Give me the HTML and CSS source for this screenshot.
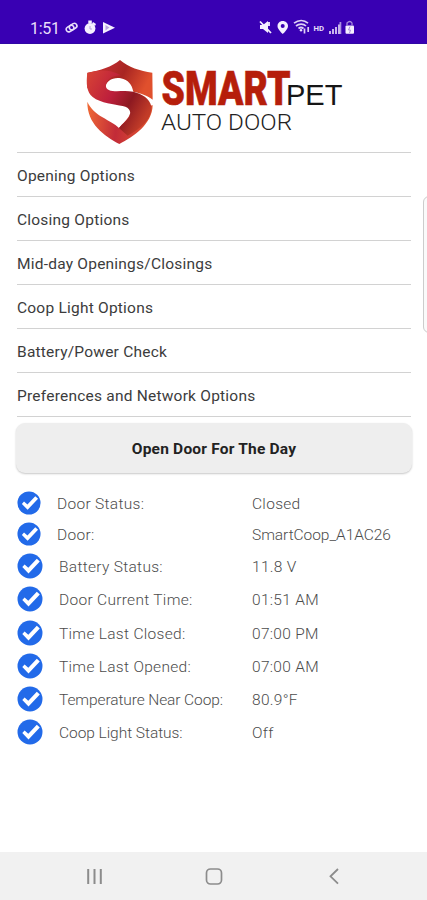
FILE: index.html
```html
<!DOCTYPE html>
<html lang="en">
<head>
<meta charset="utf-8">
<title>Smart Pet Auto Door</title>
<link rel="stylesheet" href="styles.css">
</head>
<body>
<div class="statusbar">
  <span class="clock">1:51</span>
  <svg class="status-icons" width="50" height="16" viewBox="65 19 50 16">
    <g fill="none" stroke="#e8defa" stroke-width="1.6"><rect x="65.8" y="26" width="8" height="5" rx="2.5" transform="rotate(-30 70 28)"/><rect x="69.3" y="24.2" width="8" height="5" rx="2.5" transform="rotate(-30 73 27)"/></g>
    <g fill="#f5f0ff"><circle cx="90" cy="28.5" r="5.4"/><rect x="88.3" y="20.5" width="3.5" height="3"/><path d="M93 22l3 2-1 2-3-2z"/><path d="M103 22l12 5.7-12 5.8z"/></g>
    <path d="M90 26v3h2" stroke="#b9a2e2" fill="none"/><path d="M105.5 25v5.500l4-3z" fill="#b9a2e2"/>
  </svg>
  <svg class="signal-icons" width="97" height="17" viewBox="258 18 97 17">
    <g fill="#f5f0ff"><path d="M260 25h3l5-4v12l-5-4h-3z"/><path d="M282.700 21c-3 0-5.200 2.200-5.200 5 0 3.600 5.200 8 5.200 8s5.300-4.400 5.300-8c0-2.800-2.300-5-5.300-5z"/></g>
    <path d="M260 21.500l11 11.500M269 22v4" stroke="#f5f0ff" stroke-width="1.800"/>
    <circle cx="282.700" cy="26" r="2" fill="#3900b3"/>
    <g fill="none" stroke="#ded0f5" stroke-width="1.700"><path d="M294 23.200c4.500-3.500 10-3.500 14 0M296 26c3-2.500 7.500-2.500 10 0M298.500 28.500c1.500-1.200 3.500-1.200 5 0"/><path d="M304.500 28.500v5M308.200 27v5"/></g>
    <circle cx="301" cy="30.200" r="1.200" fill="#eee6ff"/>
    <text x="313.500" y="30.500" class="hd" textLength="10.500" lengthAdjust="spacingAndGlyphs">HD</text>
    <g fill="#c8b4ec"><path d="M329 31h2v3h-2zM332 29h2v5h-2zM335 27h2v7h-2zM338 24.500h2v9.500h-2z"/><path d="M339.500 22h1.800v12h-1.800z" opacity=".8"/></g>
    <rect x="345.500" y="25.500" width="8.500" height="8.300" rx="1" fill="#f5f0ff"/><path d="M347 25v-2q3-3 5 0v2" fill="none" stroke="#a98bdb" stroke-width="1.300"/><path d="M350 26.500l-1.500 3.500h2l-1 3" fill="none" stroke="#a98bdb"/>
  </svg>
</div>

<header class="brand">
  <svg width="427" height="108" viewBox="0 44 427 108">
    <defs>
      <linearGradient id="top" x1="0" y1="0" x2="1" y2=".3"><stop offset="0" stop-color="#c9332f"/><stop offset=".4" stop-color="#b72a2c"/><stop offset=".6" stop-color="#a82522"/><stop offset="1" stop-color="#e0502d"/></linearGradient>
      <linearGradient id="mid" x1="0" y1="0" x2="1" y2=".55"><stop offset="0" stop-color="#d84434"/><stop offset=".45" stop-color="#bd1f3c"/><stop offset=".72" stop-color="#8d1921"/><stop offset="1" stop-color="#c23c28"/></linearGradient>
      <linearGradient id="low" x1="0" y1="0" x2="1" y2=".1"><stop offset="0" stop-color="#f06a35"/><stop offset=".5" stop-color="#c22b38"/><stop offset="1" stop-color="#e0542f"/></linearGradient>
    </defs>
    <g transform="translate(80 55) scale(.33333)">
      <path d="M120 15C95 36 62 46 22 53L22 100L77 100C75 78 100 66 122 70C145 74 156 90 160 110C180 114 203 122 218 134L217 53C180 48 145 37 120 15Z" fill="url(#top)"/>
      <path d="M22 140C21 206 72 242 118 267C161 244 217 208 218 150L150 176C144 194 128 204 117 219C92 193 42 185 22 140Z" fill="url(#low)"/>
      <path d="M22 54C18 85 20 112 38 126C62 145 104 148 128 153C152 158 155 174 146 188C139 199 126 206 117 219L143 242C184 220 216 192 214 154C209 130 185 116 160 110C136 106 116 110 98 108C80 106 74 96 79 84C84 69 101 62 122 61C83 38 48 47 22 54Z" fill="url(#mid)"/>
      <path d="M202 124Q218 136 218 153Q214 137 202 124Z" fill="#fff"/>
    </g>
    <text class="smart" x="161.500" y="105" textLength="129" lengthAdjust="spacingAndGlyphs">SMART</text>
    <text class="pet" x="286" y="105" textLength="56.500" lengthAdjust="spacingAndGlyphs">PET</text>
    <text class="auto" x="161" y="129.500" textLength="131" lengthAdjust="spacingAndGlyphs">AUTO DOOR</text>
  </svg>
</header>

<main>
  <nav class="menu">
    <a>Opening Options</a>
    <a>Closing Options</a>
    <a>Mid-day Openings/Closings</a>
    <a>Coop Light Options</a>
    <a>Battery/Power Check</a>
    <a>Preferences and Network Options</a>
  </nav>
  <button class="open">Open Door For The Day</button>
  <svg class="symbols"><symbol id="check" viewBox="0 0 26 26"><circle cx="13" cy="13" r="12.500" fill="#226ae9"/><path d="M5.300 14.100l2.300-2.600 3.700 3.200 8.500-9 3 2.700-11.300 12z" fill="#fff"/></symbol></svg>
  <section class="status">
    <div class="row small"><svg><use href="#check"/></svg><span>Door Status:</span><b>Closed</b></div>
    <div class="row small"><svg><use href="#check"/></svg><span>Door:</span><b class="device">SmartCoop_A1AC26</b></div>
    <div class="row"><svg><use href="#check"/></svg><span>Battery Status:</span><b>11.8 V</b></div>
    <div class="row"><svg><use href="#check"/></svg><span>Door Current Time:</span><b>01:51 AM</b></div>
    <div class="row"><svg><use href="#check"/></svg><span>Time Last Closed:</span><b>07:00 PM</b></div>
    <div class="row"><svg><use href="#check"/></svg><span>Time Last Opened:</span><b>07:00 AM</b></div>
    <div class="row"><svg><use href="#check"/></svg><span class="temp">Temperature Near Coop:</span><b>80.9°F</b></div>
    <div class="row"><svg><use href="#check"/></svg><span class="light">Coop Light Status:</span><b>Off</b></div>
  </section>
</main>
<div class="edge-handle"></div>
<footer class="navbar">
  <svg width="427" height="48" viewBox="0 852 427 48" fill="none" stroke="#8c8c8c">
    <path d="M88.200 869v15M94.500 869v15M100.800 869v15" stroke-width="2"/>
    <rect x="206.500" y="869" width="15" height="15" rx="4" stroke-width="1.700"/>
    <path d="M338 869l-7.500 7.300 7.500 7.300" stroke-width="1.800"/>
  </svg>
</footer>
</body>
</html>
```
FILE: styles.css
```css
* { box-sizing: border-box; }
body {
  margin: 0;
  width: 427px;
  height: 900px;
  display: flex;
  flex-direction: column;
  position: relative;
  overflow: hidden;
  background: #fff;
  font-family: Roboto, "Liberation Sans", sans-serif;
}
svg { display: block; flex: none; }
.statusbar {
  height: 44px;
  background: #3900b3;
  border-bottom: 1px solid #3008a5;
  padding: 18px 72px 0 30px;
  display: flex;
  align-items: flex-start;
  color: #e8defa;
}
.clock { width: 35px; font-size: 16px; line-height: 21px; letter-spacing: -.3px; }
.status-icons { margin-top: 1px; }
.signal-icons { margin-left: auto; }
.hd { font: 700 7px Roboto, sans-serif; fill: #e8defa; }
.brand { height: 108px; }
.smart { font: 900 48px Roboto, sans-serif; fill: #b61e0b; stroke: #b61e0b; stroke-width: .6; }
.pet { font: 400 29px "Liberation Sans", sans-serif; fill: #161616; }
.auto { font: 300 21.500px Roboto, sans-serif; fill: #222; }
main { flex: 1; padding: 0 15px 0 16px; }
.menu { border-top: 1px solid #d2d2d2; margin: 0 1px; }
.menu a {
  display: flex;
  align-items: center;
  height: 43.950px;
  border-bottom: 1px solid #d2d2d2;
  color: #3c3c3c;
  font-size: 15.500px;
  letter-spacing: .22px;
  padding-top: 4px;
}
.open {
  display: block;
  width: 396px;
  height: 50px;
  margin: 6px 0 0;
  padding: 3px 0 0;
  border: 0;
  border-radius: 9px;
  background: #eee;
  box-shadow: 0 1px 2px rgba(0, 0, 0, .22);
  color: #222;
  font: 700 15.500px Roboto, sans-serif;
  letter-spacing: .2px;
}
.symbols { width: 0; height: 0; }
.status { margin-top: 15px; }
.row {
  height: 33.200px;
  display: grid;
  grid-template-columns: 43px 193px 1fr;
  align-items: center;
  color: #4c4c4c;
  font-size: 15.500px;
  font-weight: 300;
  letter-spacing: .3px;
}
.row svg { width: 26px; height: 26px; margin-left: 1px; }
.row span, .row b { padding-top: 2px; }
.row b { font-weight: 300; white-space: nowrap; }
.row .device { letter-spacing: -.05px; }
.row .temp { letter-spacing: -.1px; }
.row .light { letter-spacing: -.05px; }
.row.small { height: 31px; grid-template-columns: 41px 195px 1fr; }
.row.small svg { width: 24px; height: 24px; }
.edge-handle {
  position: absolute;
  left: 423px;
  top: 196px;
  width: 12px;
  height: 137px;
  border: 1px solid #ccc;
  border-radius: 6px;
  background: #fafafa;
}
.navbar { height: 48px; background: #f1f1f1; }
```
